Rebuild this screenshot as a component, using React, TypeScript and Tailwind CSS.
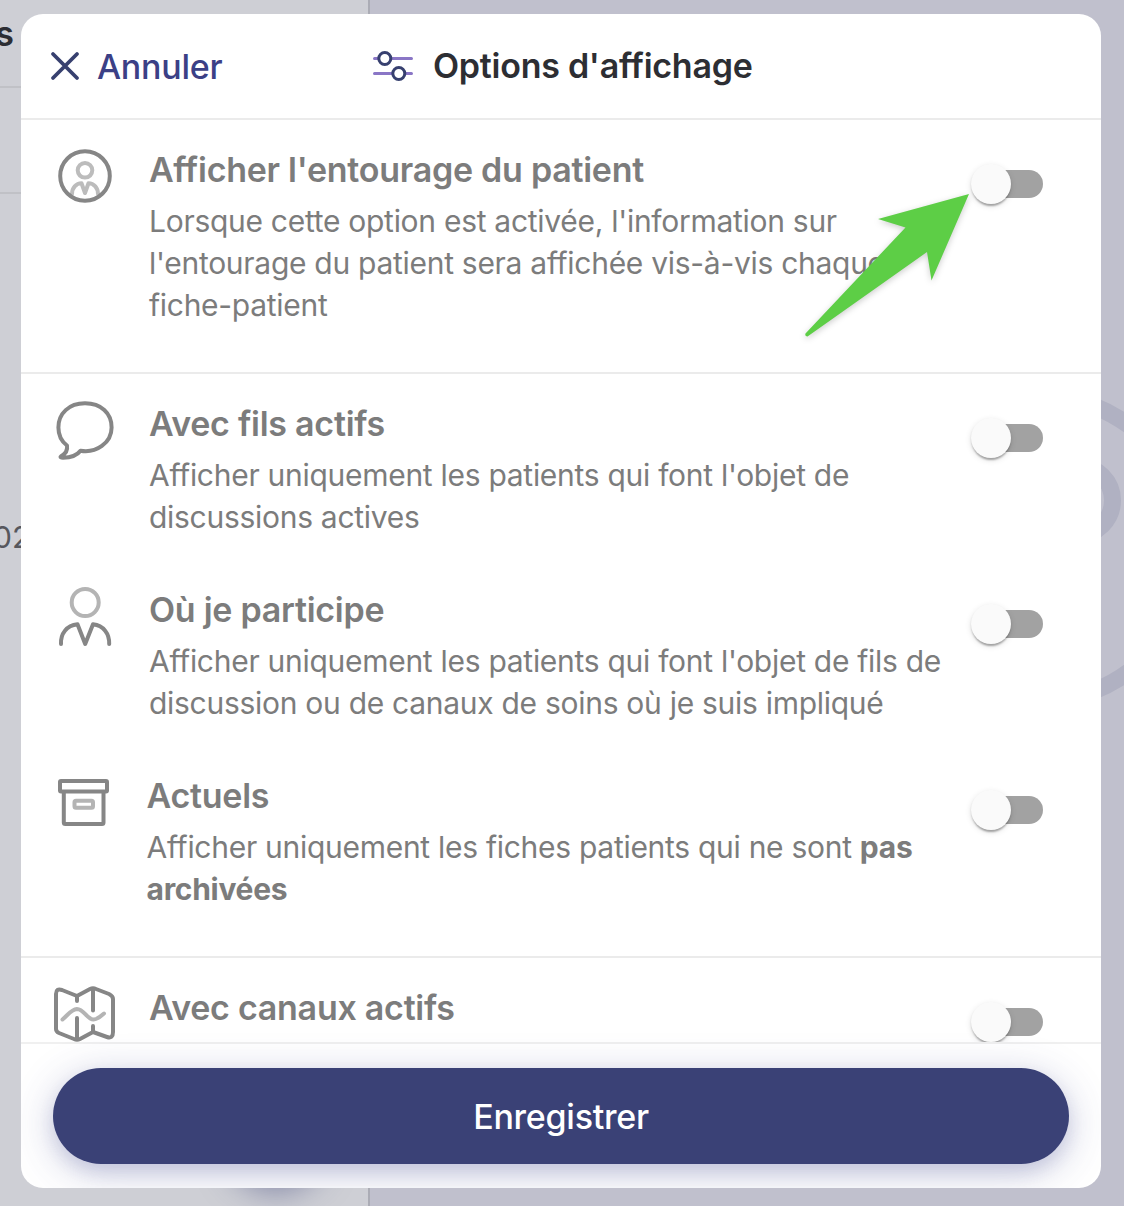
import type { ReactNode } from "react";

function Switch() {
  return (
    <button className="relative mt-[14px] flex h-[40px] w-[72px] shrink-0 items-center justify-end" role="switch" aria-checked="false">
      <span className="h-[28px] w-[68px] rounded-full bg-[#a2a2a2]" />
      <span className="absolute left-0 top-0 size-[40px] rounded-full bg-[#fafafa] shadow-[0_4px_2px_-2px_rgba(0,0,0,0.2),0_2px_2px_rgba(0,0,0,0.14),0_2px_6px_rgba(0,0,0,0.12)]" />
    </button>
  );
}

function Row({ icon, title, children, shift }: { icon: ReactNode; title: string; children?: ReactNode; shift?: boolean }) {
  return (
    <div className="flex h-[186px] shrink-0 items-start pr-[58px]">
      <div className={shift ? "flex w-[125.500px] shrink-0 pl-[24px]" : "flex w-[128px] shrink-0 pl-[24px]"}>{icon}</div>
      <div className="min-w-0 flex-1 whitespace-nowrap text-[#7c7c7c]">
        <h2 className="h-[40px] text-[34px] leading-[40px] font-semibold tracking-[-0.26px]">{title}</h2>
        <p className="mt-[10px] text-[30px] leading-[42px] tracking-[-0.283px]">{children}</p>
      </div>
      <Switch />
    </div>
  );
}

const DARK = "#868686";
const LIGHT = "#b4b4b4";

function EntourageIcon() {
  return (
    <svg className="-mt-[14px] h-[80px] w-[80px]" viewBox="45 136 80 80" fill="none" strokeWidth="4" strokeLinecap="round" strokeLinejoin="round">
      <g stroke="#bcbcbc">
        <circle cx="85" cy="170.300" r="7.300" />
        <path d="M72 194C72 188 76 183.300 81.500 183.300L85 193L88.500 183.300C94 183.300 98 188 98 194" />
      </g>
      <circle cx="85" cy="176" r="24.800" stroke={DARK} />
    </svg>
  );
}

function BubbleIcon() {
  return (
    <svg className="-mt-[14px] h-[80px] w-[80px]" viewBox="45 390 80 80" fill="none" stroke={DARK} strokeWidth="4" strokeLinecap="round" strokeLinejoin="round">
      <path d="M80.500 450.800C96 453.500 111.600 443 111.600 427.500C111.600 413 101 403.300 85 403.300C69 403.300 58.400 413.500 58.400 427.500C58.400 435 61 441 67 445.500C67.800 450 66 453.500 61 456.300C59.800 457.200 61 457.700 63 457.700C71 457.700 77 455.500 80.500 450.800Z" />
    </svg>
  );
}

function PersonIcon() {
  return (
    <svg className="-mt-[14px] h-[80px] w-[80px]" viewBox="45 576 80 80" fill="none" strokeWidth="4" strokeLinecap="round" strokeLinejoin="round">
      <circle cx="85.200" cy="602.500" r="13.500" stroke={LIGHT} />
      <path d="M61 644C60.500 633.500 66.500 625.500 77.500 624.300L85.200 644L93 624.300C103.500 625.500 109.500 633.500 109.200 644" stroke={DARK} />
    </svg>
  );
}

function ArchiveIcon() {
  return (
    <svg className="-mt-[14px] h-[80px] w-[80px]" viewBox="45 762 80 80" fill="none" strokeWidth="4" strokeLinejoin="round">
      <g stroke={DARK}>
        <rect x="60" y="781" width="47" height="10.500" rx="1" />
        <path d="M63.800 792V822.500Q63.800 824 65.300 824H102Q103.500 824 103.500 822.500V792" />
      </g>
      <rect x="74.500" y="800.800" width="18.500" height="7" rx="1.500" stroke={LIGHT} />
    </svg>
  );
}

function MapIcon() {
  return (
    <svg className="-mt-[14px] h-[80px] w-[80px]" viewBox="45 974 80 80" fill="none" strokeWidth="4" strokeLinecap="round" strokeLinejoin="round">
      <path d="M62.500 1019.500C68 1015 71 1009.500 77 1009C84 1009 87 1019.500 93.500 1019.500C98 1019.500 101 1016 104 1013.500" stroke={LIGHT} />
      <g stroke={DARK}>
        <path d="M56 994Q56 988 62 990L77 996L90 989Q93 987.500 96 989L109 994Q113 996 113 999V1032Q113 1039 107 1037L93 1032L80 1039Q77 1040.500 74 1039L59 1033Q56 1031.500 56 1029Z" />
        <path d="M77 996V1001M77 1018V1039M93 989V1010.500M93 1026V1032" />
      </g>
    </svg>
  );
}

export default function App() {
  return (
    <div className="relative h-[1206px] w-[1124px] overflow-hidden bg-[#cecfd5] font-['Inter',sans-serif]">
      <div className="absolute inset-0 flex">
        <div className="relative w-[370px] shrink-0 overflow-hidden border-r-2 border-[#abacb5] text-[#2c2d33]">
          <div className="flex h-[88px] items-start justify-end border-b-2 border-[#c0c1c6] pr-[354px] text-[34px] leading-[68px] font-semibold">
            s
          </div>
          <div className="h-[106px] border-b-2 border-[#c0c1c6]" />
          <span className="absolute -left-[7px] top-[516px] text-[30px] leading-[42px] text-[#56575d]">02</span>
          <span className="absolute left-[226px] top-[1084px] size-[100px] rounded-full bg-[#3a4176] shadow-[0_8px_32px_rgba(57,64,119,0.5)]" />
        </div>
        <div className="relative flex-1 overflow-hidden bg-[#c0c0cd]">
          <svg className="absolute inset-0 size-full" viewBox="370 0 754 1206" fill="none" stroke="#b0b1c2">
            <circle cx="1038" cy="548.500" r="153" strokeWidth="17" />
            <circle cx="1078" cy="500.500" r="34.500" strokeWidth="17" />
          </svg>
        </div>
      </div>

      <div className="absolute left-[21px] top-[14px] flex h-[1174px] w-[1080px] flex-col overflow-hidden rounded-[22px] bg-white">
        <header className="flex h-[106px] shrink-0 items-center border-b-2 border-[#ebebeb]">
          <button className="flex w-[351px] items-center pl-[29px] text-[34px] leading-[40px] font-medium tracking-[-0.26px] text-[#3b4086]">
            <svg className="mr-[17px] size-[30px]" viewBox="0 0 30 30" fill="none" stroke="#37406f" strokeWidth="3.800" strokeLinecap="round">
              <path d="M3 3L27 27M27 3L3 27" />
            </svg>
            <span className="pt-[2px] leading-[38px]">Annuler</span>
          </button>
          <svg className="h-[32px] w-[42px]" viewBox="372.500 50 42 32" fill="none" strokeWidth="3" strokeLinecap="round">
            <path d="M375 58.500H412M375 73.500H412" stroke="#8a76c6" />
            <circle cx="385.300" cy="58.500" r="6" fill="#fff" stroke="#37406f" />
            <circle cx="399.300" cy="73.500" r="6" fill="#fff" stroke="#37406f" />
          </svg>
          <h1 className="ml-[19px] text-[34px] leading-[40px] font-semibold tracking-[-0.26px] text-[#2d2e33]">Options d'affichage</h1>
        </header>

        <main className="flex min-h-0 flex-1 flex-col overflow-hidden">
          <section className="h-[254px] shrink-0 border-b-2 border-[#ebebeb] pt-[30px]">
            <Row icon={<EntourageIcon />} title="Afficher l'entourage du patient">
              Lorsque cette option est activée, l'information sur<br />
              l'entourage du patient sera affichée vis-à-vis chaque<br />
              fiche-patient
            </Row>
          </section>
          <section className="h-[584px] shrink-0 border-b-2 border-[#ebebeb] pt-[30px]">
            <Row icon={<BubbleIcon />} title="Avec fils actifs">
              Afficher uniquement les patients qui font l'objet de<br />
              discussions actives
            </Row>
            <Row icon={<PersonIcon />} title="Où je participe">
              Afficher uniquement les patients qui font l'objet de fils de<br />
              discussion ou de canaux de soins où je suis impliqué
            </Row>
            <Row icon={<ArchiveIcon />} title="Actuels" shift>
              Afficher uniquement les fiches patients qui ne sont <b>pas</b><br />
              <b>archivées</b>
            </Row>
          </section>
          <section className="shrink-0 pt-[30px]">
            <Row icon={<MapIcon />} title="Avec canaux actifs" />
          </section>
        </main>

        <footer className="h-[146px] shrink-0 border-t-2 border-[#f0f0f0] px-[32px] pt-[24px]">
          <button className="h-[96px] w-full rounded-full bg-[#3a4176] text-[34px] font-medium tracking-[-0.26px] text-white shadow-[0_8px_40px_rgba(57,64,140,0.28),0_8px_16px_rgba(57,64,140,0.12)]">
            Enregistrer
          </button>
        </footer>
      </div>

      <svg className="absolute left-[795px] top-[180px] h-[170px] w-[190px] drop-shadow-[0_2px_3px_rgba(0,0,0,0.2)]" viewBox="795 180 190 170" fill="#5dce46">
        <path d="M969 194L878 219L905.500 227.500L805.500 333.500Q804.500 336.500 807.500 336.500L927 252L931.500 280.500Z" />
      </svg>
    </div>
  );
}
